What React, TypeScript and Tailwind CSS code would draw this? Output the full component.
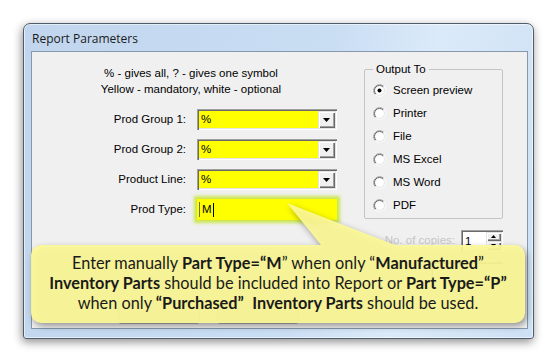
import React from 'react';

const sunken =
  'shadow-[inset_1px_1px_0_#a0a0a0,inset_2px_2px_0_#696969,inset_-1px_-1px_0_#ffffff,inset_-2px_-2px_0_#e3e3e3]';
const raised =
  'shadow-[inset_1px_1px_0_#e3e3e3,inset_2px_2px_0_#ffffff,inset_-1px_-1px_0_#696969,inset_-2px_-2px_0_#a0a0a0]';

function Radio({ checked }: { checked?: boolean }) {
  return (
    <svg width="13" height="13" viewBox="0 0 13 13" className="shrink-0">
      <circle cx="6.5" cy="6.5" r="5.5" fill="#ffffff" />
      <path d="M2.26 10.74A6 6 0 0 1 10.74 2.26" stroke="#a0a0a0" fill="none" />
      <path d="M10.74 2.26A6 6 0 0 1 2.26 10.74" stroke="#ffffff" fill="none" />
      <path d="M2.96 10.04A5 5 0 0 1 10.04 2.96" stroke="#696969" fill="none" />
      <path d="M10.04 2.96A5 5 0 0 1 2.96 10.04" stroke="#e3e3e3" fill="none" />
      {checked && <circle cx="6.5" cy="6.5" r="2" fill="#000000" />}
    </svg>
  );
}

function DownArrow() {
  return (
    <svg width="7" height="4" viewBox="0 0 7 4">
      <path d="M0 0h7L3.5 4z" fill="#000" />
    </svg>
  );
}

function Combo({ value }: { value: string }) {
  return (
    <div className={`flex h-[21px] w-[140px] bg-[#ffff00] p-[2px] ${sunken}`}>
      <span className="flex-1 pl-[2px] leading-[17px]">{value}</span>
      <span className={`flex w-[17px] items-center justify-center bg-[#f0f0f0] ${raised}`}>
        <DownArrow />
      </span>
    </div>
  );
}

const rows = ['Prod Group 1:', 'Prod Group 2:', 'Product Line:'];
const outputs = ['Screen preview', 'Printer', 'File', 'MS Excel', 'MS Word', 'PDF'];

export default function App() {
  return (
    <div className="relative h-[363px] w-[557px] overflow-hidden bg-white pl-[23px] pt-[23px] font-['Liberation_Sans',Arial,sans-serif] text-[11.5px] text-black">
      {/* Window */}
      <div className="flex h-[316px] w-[511px] flex-col rounded-t-[7px] rounded-b-[3px] border border-[#4f5d6b] bg-[linear-gradient(100deg,#c1d6ee_0%,#c9ddf3_55%,#dbeaf9_74%,#cde0f4_100%)] shadow-[-1px_3px_10px_rgba(0,0,0,0.45),inset_0_0_0_1px_rgba(255,255,255,0.55)]">
        <div className="flex h-[27px] items-center pl-[8px] pt-[2px] font-['Open_Sans',sans-serif] text-[12px] text-[#1b1b1b]">
          Report Parameters
        </div>

        {/* Client area */}
        <div className="ml-[7px] flex h-[278px] w-[497px] flex-col border border-[#8598ac] bg-[#f0f0f0]">
          <div className="flex">
            {/* Left column */}
            <div className="flex w-[318px] flex-col pt-[13px]">
              <div className="text-center leading-[16px]">% - gives all, ? - gives one symbol</div>
              <div className="text-center leading-[16px]">Yellow - mandatory, white - optional</div>
              <div className="mt-[12px] flex flex-col gap-[9px]">
                {rows.map((r) => (
                  <div key={r} className="flex h-[21px] items-center">
                    <span className="w-[154px] text-right">{r}</span>
                    <div className="ml-[11px]">
                      <Combo value="%" />
                    </div>
                  </div>
                ))}
                <div className="flex h-[21px] items-center">
                  <span className="w-[154px] text-right">Prod Type:</span>
                  <div className="ml-[11px] flex h-[21px] w-[140px] items-center bg-[#ffff00] pl-[2px] shadow-[0_0_3px_3px_rgba(196,228,52,0.85)]">
                    <span className="h-[15px] w-px bg-[#6b6b3a]" />
                    <span className="ml-[2px] leading-[17px]">M</span>
                    <span className="ml-[1px] h-[14px] w-px bg-black" />
                  </div>
                </div>
              </div>
            </div>

            {/* Right column */}
            <div className="ml-[14px] flex w-[139px] flex-col pt-[9px]">
              <fieldset className="rounded-[2px] border border-[#c4c4c4] pb-[1px] pl-[8px] pt-[2px]">
                <legend className="px-[3px] leading-[16px]">Output To</legend>
                {outputs.map((o, i) => (
                  <div key={o} className="flex h-[23px] items-center gap-[7px]">
                    <Radio checked={i === 0} />
                    <span>{o}</span>
                  </div>
                ))}
              </fieldset>

              <div className="mt-[11px] flex h-[22px] items-center justify-end">
                <span className="mr-[6px] text-[#c6c6c6]">No. of copies:</span>
                <div className={`flex h-[22px] w-[42px] bg-white p-[2px] ${sunken}`}>
                  <span className="flex-1 pl-[2px] leading-[18px]">1</span>
                  <div className="flex w-[15px] flex-col">
                    <span className={`flex flex-1 items-center justify-center bg-[#f0f0f0] ${raised}`}>
                      <svg width="5" height="3" viewBox="0 0 5 3">
                        <path d="M0 3h5L2.5 0z" fill="#000" />
                      </svg>
                    </span>
                    <span className={`flex flex-1 items-center justify-center bg-[#f0f0f0] ${raised}`}>
                      <svg width="5" height="3" viewBox="0 0 5 3">
                        <path d="M0 0h5L2.5 3z" fill="#000" />
                      </svg>
                    </span>
                  </div>
                </div>
              </div>

              <div className="mt-[10px] flex h-[21px] items-center justify-end">
                <div className={`h-[21px] w-[72px] bg-[#f6f6f6] ${sunken}`} />
              </div>
            </div>
          </div>

          {/* Buttons (behind the callout) */}
          <div className="mt-[17px] flex gap-[17px] pl-[86px]">
            <div className="h-[24px] w-[82px] rounded-[3px] border border-[#b4b4b4] bg-[#ececec]" />
            <div className="h-[24px] w-[82px] rounded-[3px] border border-[#b4b4b4] bg-[#ececec]" />
          </div>
        </div>
      </div>

      {/* Callout */}
      <svg
        width="494"
        height="120"
        viewBox="0 0 494 120"
        className="absolute left-[31px] top-[203px] drop-shadow-[2px_3px_3px_rgba(0,0,0,0.4)]"
      >
        <path
          d="M10 42H290L256 0L364 42H484A10 10 0 0 1 494 52V110A10 10 0 0 1 484 120H10A10 10 0 0 1 0 110V52A10 10 0 0 1 10 42Z"
          fill="#fdf996"
          fillOpacity="0.92"
        />
      </svg>
      <div className="absolute left-[31px] top-[245px] flex h-[78px] w-[494px] flex-col items-center pt-[8px] font-['Lato',sans-serif] text-[16.3px] leading-[20px] text-[#1a1a1a]">
        <div>
          Enter manually <b>Part Type=“M</b>” when only “<b>Manufactured</b>”
        </div>
        <div>
          <b>Inventory Parts</b> should be included into Report or <b>Part Type=“P”</b>
        </div>
        <div className="whitespace-pre">
          when only <b>“Purchased”</b>  <b>Inventory Parts</b> should be used.
        </div>
      </div>
    </div>
  );
}
